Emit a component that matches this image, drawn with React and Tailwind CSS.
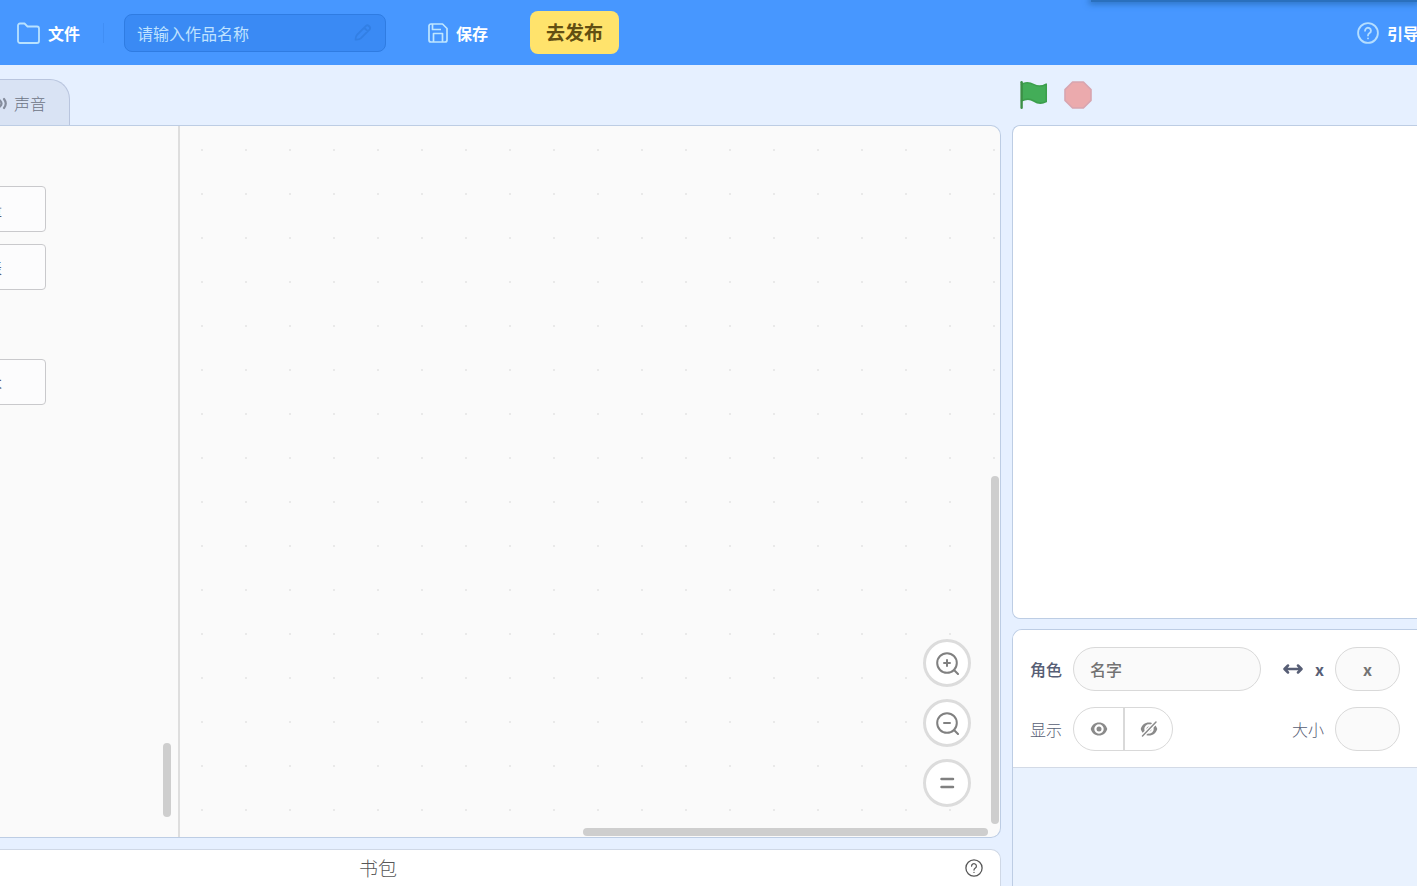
// 編輯器主畫面：頂部列 + 積木區 / 工作區 + 舞台 + 角色資訊
import { useState } from 'react'

function FolderIcon() {
  return (
    <svg className="w-6 h-6 shrink-0" fill="none" stroke="#b9e2ff" strokeWidth="1.8" strokeLinejoin="round" viewBox="0 0 24 24">
      <path d="M2 4.500a2 2 0 0 1 2-2h4.500l3 3H21a2 2 0 0 1 2 2V20a2 2 0 0 1-2 2H4a2 2 0 0 1-2-2z" />
    </svg>
  )
}

function SaveIcon() {
  return (
    <svg className="w-5 h-5 shrink-0" fill="none" stroke="#bfe6ff" strokeWidth="1.7" strokeLinejoin="round" viewBox="0 0 20 20">
      <path d="M1 3a2 2 0 0 1 2-2h11.500L19 5.500V17a2 2 0 0 1-2 2H3a2 2 0 0 1-2-2z" />
      <path d="M4.500 1v5.500H13M5.500 19v-8.500h9V19" />
    </svg>
  )
}

function PencilIcon() {
  return (
    <svg className="w-5 h-5 shrink-0" fill="none" stroke="#327fe4" strokeWidth="1.8" strokeLinejoin="round" viewBox="0 0 20 20">
      <path d="M2.500 16.500c0-2 .4-3.600 1.500-4.700l9-9c1.800-1.600 5.200 1.600 3.700 3.600l-9 9c-1.300 1.100-3 1.300-5.200 1.100zM11.500 5l3.500 3.500" />
    </svg>
  )
}

function HelpIcon({ className }) {
  return (
    <svg className={className} fill="none" stroke="currentColor" strokeLinecap="round" viewBox="0 0 24 24">
      <circle cx="12" cy="12" r="10.800" />
      <path d="M8.800 9.500a3.200 3.200 0 1 1 5 2.600c-1.100.8-1.800 1.300-1.800 2.600" />
      <path d="M12 17.800v.1" />
    </svg>
  )
}

function SoundIcon() {
  return (
    <svg className="w-5 h-5 shrink-0" viewBox="0 0 20 20" fill="none" stroke="#858c9c" strokeWidth="2.2" strokeLinecap="round">
      <path d="M1 8v5h3l5 4V4L4 8z" fill="#858c9c" />
      <path d="M13 7.500q3 3 0 6M17 6q3.500 4.500 0 9" />
    </svg>
  )
}

function FlagIcon() {
  return (
    <svg className="w-7 h-7" viewBox="0 0 17 17.5" strokeLinecap="round" strokeLinejoin="round" fill="#43ad58" stroke="#3c9f4c">
      <path d="M.75 2C3.500.500 6 .900 8.440 2.300c2.500 1.400 5 1.200 7.690-.3v10.900c-2.700 1.400-5.200 1.300-7.690-.4-2.440-1.600-5-1.500-7.690-.1" />
      <path d="M.75 16.750v-16" stroke="#3c8f45" strokeWidth="1.500" />
    </svg>
  )
}

function StopIcon() {
  return (
    <svg className="w-7 h-7" viewBox="0 0 14 14" fill="#ebaaad" stroke="#d8a5b0" strokeWidth=".8" strokeLinejoin="round">
      <path d="M4.300.5h5.400l3.800 3.800v5.400l-3.800 3.800H4.300L.5 9.700V4.300z" />
    </svg>
  )
}

function EyeIcon({ off }) {
  return (
    <svg className="w-5 h-5" viewBox="0 0 20 20">
      <path fill="#8a8a8a" fillRule="evenodd" d="M10 3.500c4.200 0 7.300 2.700 8.300 6.500-1 3.800-4.100 6.500-8.300 6.500S2.700 13.800 1.700 10c1-3.800 4.100-6.500 8.300-6.500zm0 1.800a4.700 4.700 0 1 0 0 9.400 4.700 4.700 0 0 0 0-9.400z" />
      <circle cx="10" cy="10" r="2.500" fill="#8a8a8a" />
      {off && (
        <>
          <path d="M3 17.500L17 3" stroke="#fff" strokeWidth="4" />
          <path d="M3.500 17L17 3" stroke="#8a8a8a" strokeWidth="1.500" strokeLinecap="round" />
        </>
      )}
    </svg>
  )
}

// 縮放圖示：in = 放大、out = 縮小、其他 = 還原
function ZoomIcon({ type }) {
  return (
    <svg className="w-6 h-6" viewBox="0 0 24 24" fill="none" stroke="#808080" strokeWidth="2" strokeLinecap="round">
      {type === 'reset' ? (
        <path d="M6.500 8h11.500M6.500 16h11.500" strokeWidth="2.500" />
      ) : (
        <>
          <circle cx="12" cy="12" r="9.800" />
          <path d="M19 19l4 4M9 12h6" />
          {type === 'in' && <path d="M12 9v6" />}
        </>
      )}
    </svg>
  )
}

const zoomButtons = [
  { type: 'in', label: '放大' },
  { type: 'out', label: '缩小' },
  { type: 'reset', label: '还原' },
]

function Header() {
  const [title, setTitle] = useState('')

  return (
    <header className="relative h-[65px] shrink-0 bg-[#4797ff] flex items-center overflow-hidden text-white">
      <button className="flex items-center gap-2 pl-4 font-bold">
        <FolderIcon />
        文件
      </button>
      <div className="w-px h-5 ml-[23px] bg-[#408ef5]" />

      <label className="w-[262px] h-[38px] ml-5 px-3 flex items-center gap-2 rounded-lg bg-[#3a8af4] border border-[#2f7ce2]">
        <input
          type="text"
          value={title}
          onChange={(e) => setTitle(e.target.value)}
          placeholder="请输入作品名称"
          aria-label="作品名称"
          className="min-w-0 flex-1 bg-transparent outline-none placeholder-[#bfe2ff]"
        />
        <PencilIcon />
      </label>

      <button className="flex items-center gap-2 ml-[42px] font-bold">
        <SaveIcon />
        保存
      </button>
      <button className="h-[43px] px-4 ml-[42px] rounded-lg bg-[#ffe36c] text-[#624f12] text-[19px] font-bold">
        去发布
      </button>

      <div className="flex-1" />
      <button className="w-[60px] shrink-0 flex items-center gap-2 font-bold whitespace-nowrap">
        <HelpIcon className="w-[22px] h-[22px] shrink-0 stroke-2 text-[#b5deff]" />
        引导
      </button>

      {/* 右上角浮層的陰影 */}
      <div className="absolute top-0 right-0 w-[326px] h-[2px] bg-[#2a70bd] shadow-[0_0_6px_2px_#2a70bd]" />
    </header>
  )
}

function BlockButton({ children }) {
  return (
    <button className="h-[46px] shrink-0 px-[43px] rounded border border-[#c9c9cc] bg-[#fcfcfd] text-[#575e75] whitespace-nowrap">
      {children}
    </button>
  )
}

function Palette() {
  return (
    <div className="relative w-[180px] shrink-0 overflow-hidden border-r-2 border-[#dedede]">
      <div className="w-[46px] pt-[60px] flex flex-col items-end gap-3">
        <BlockButton>建立一个变量</BlockButton>
        <BlockButton>建立一个列表</BlockButton>
        <div className="h-[45px]" />
        <BlockButton>制作新的积木</BlockButton>
      </div>
      <div className="absolute right-[7px] bottom-5 w-2 h-[74px] rounded-full bg-[#cecece]" />
    </div>
  )
}

function Workspace() {
  return (
    <div className="relative flex-1 bg-[radial-gradient(circle,#e9e9e9_1px,transparent_1px)] bg-[size:44px_44px] bg-[position:0px_2px]">
      <div className="absolute right-[29px] bottom-[30px] flex flex-col gap-3">
        {zoomButtons.map(({ type, label }) => (
          <button key={type} aria-label={label} className="w-12 h-12 rounded-full bg-white border-[3px] border-[#dcdcdc] flex items-center justify-center">
            <ZoomIcon type={type} />
          </button>
        ))}
      </div>
      <div className="absolute right-px bottom-[13px] w-2 h-[348px] rounded-full bg-[#cecece]" />
      <div className="absolute right-3 bottom-px w-[405px] h-2 rounded-full bg-[#cecece]" />
    </div>
  )
}

function SpriteInfo() {
  const [name, setName] = useState('')
  const [x, setX] = useState('')
  const [size, setSize] = useState('')
  const small = 'w-[65px] h-11 rounded-full border border-[#d9d9d9] bg-[#fafafa] text-center outline-none'

  return (
    <div className="px-[17px] pt-[17px] pb-4 flex flex-col gap-4 bg-white border-b border-[#d3dae6] text-[#575e75]">
      <div className="flex items-center">
        <label htmlFor="sprite-name" className="font-medium mr-[11px]">角色</label>
        <input
          id="sprite-name"
          value={name}
          onChange={(e) => setName(e.target.value)}
          placeholder="名字"
          className="w-[188px] h-11 px-4 rounded-full border border-[#d9d9d9] bg-[#fafafa] outline-none placeholder-[#737373] font-medium"
        />
        <div className="flex-1" />
        <svg className="w-5 h-5 mr-3" viewBox="0 0 20 20" fill="none" stroke="#575e75" strokeWidth="2.500" strokeLinecap="round" strokeLinejoin="round">
          <path d="M2 10h16M5 6.500L1.500 10 5 13.500M15 6.500l3.500 3.500-3.500 3.500" />
        </svg>
        <label htmlFor="sprite-x" className="mr-[11px] font-bold">x</label>
        <input id="sprite-x" value={x} onChange={(e) => setX(e.target.value)} placeholder="x" className={`${small} placeholder-[#737373] font-bold`} />
      </div>
      <div className="flex items-center">
        <span className="mr-[11px] font-light">显示</span>
        <div className="flex w-[100px] h-11 rounded-full border border-[#d9d9d9] overflow-hidden">
          <button aria-label="显示" className="w-[51px] shrink-0 flex items-center justify-center border-r-2 border-[#d9d9d9]">
            <EyeIcon />
          </button>
          <button aria-label="隐藏" className="flex-1 flex items-center justify-center">
            <EyeIcon off />
          </button>
        </div>
        <div className="flex-1" />
        <label htmlFor="sprite-size" className="mr-[11px] font-light">大小</label>
        <input id="sprite-size" value={size} onChange={(e) => setSize(e.target.value)} className={small} />
      </div>
    </div>
  )
}

export default function App() {
  return (
    <div className="h-screen flex flex-col overflow-hidden bg-[#e6f0ff] text-base font-['Noto_Sans_CJK_SC',sans-serif]">
      <Header />

      <main className="flex-1 min-h-0 flex gap-[11px]">
        {/* 左側：分頁 + 積木編輯 + 書包 */}
        <section className="flex-1 min-w-0 flex flex-col">
          <div className="h-[60px] shrink-0 flex items-end overflow-hidden">
            <button className="w-[110px] h-[46px] -ml-10 pr-[23px] flex items-center justify-end gap-[7px] rounded-tr-[20px] border border-b-0 border-[#b9c5de] bg-[#d9e3f4] text-[#6d7485] font-light">
              <SoundIcon />
              声音
            </button>
          </div>
          <div className="flex-1 min-h-0 flex rounded-r-[10px] overflow-hidden border border-l-0 border-[#bdcde4] bg-[#fafafa]">
            <Palette />
            <Workspace />
          </div>
          <div className="h-[37px] mt-[11px] shrink-0 flex items-center pr-[17px] rounded-tr-[10px] border-t border-r border-[#cfd8e6] bg-white text-[#575757]">
            <div className="w-[756px] text-center text-[19px] font-light">书包</div>
            <div className="flex-1" />
            <button aria-label="帮助">
              <HelpIcon className="w-[18px] h-[18px] stroke-[1.7]" />
            </button>
          </div>
        </section>

        {/* 右側：舞台 + 角色 */}
        <section className="w-[405px] shrink-0 flex flex-col">
          <div className="h-[60px] shrink-0 flex items-center gap-4 pl-2">
            <button aria-label="运行"><FlagIcon /></button>
            <button aria-label="停止"><StopIcon /></button>
          </div>
          <div className="h-[494px] shrink-0 rounded-l-lg border border-r-0 border-[#bdcde4] bg-white" />
          <div className="flex-1 mt-[10px] rounded-tl-[10px] overflow-hidden border border-r-0 border-b-0 border-[#bdcde4] bg-[#e9f2fe]">
            <SpriteInfo />
          </div>
        </section>
      </main>
    </div>
  )
}
